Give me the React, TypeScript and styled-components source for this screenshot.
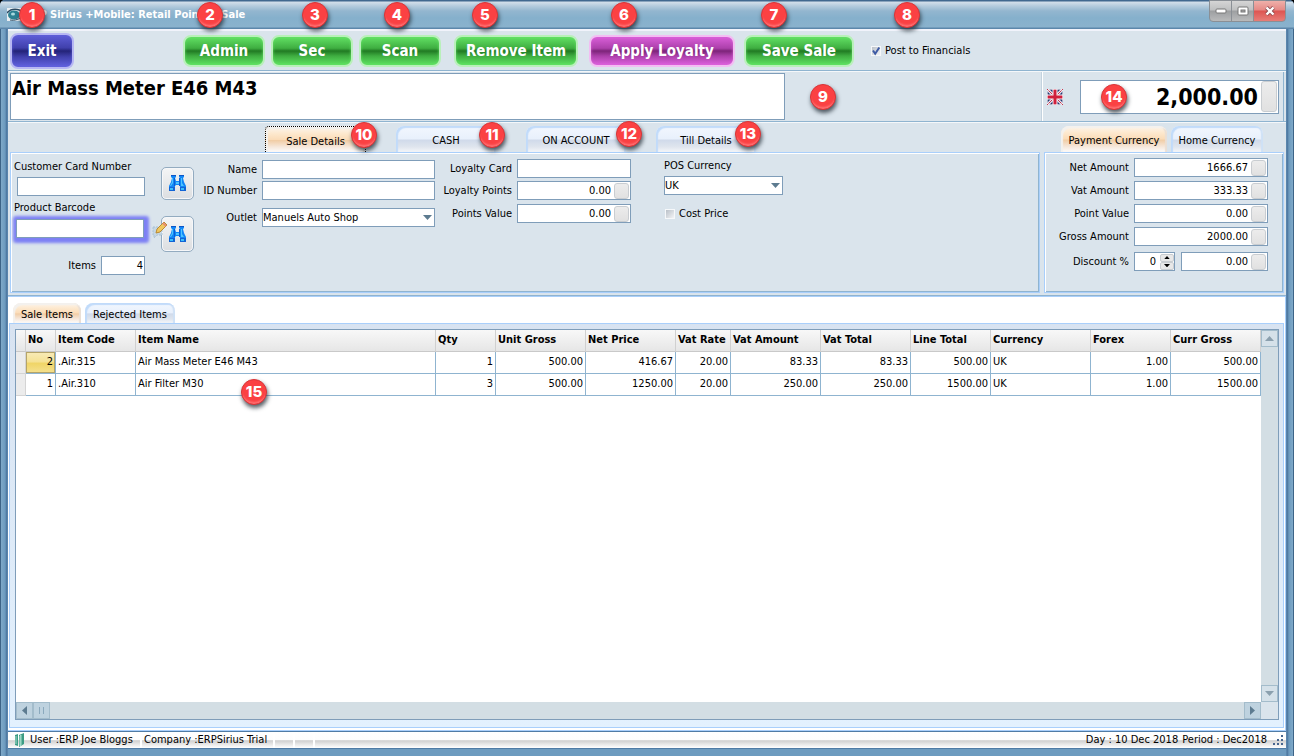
import React from "react";
import styled, { createGlobalStyle, css } from "styled-components";

const ui = '"DejaVu Sans Condensed", "Noto Sans", sans-serif';

const edge = "#7f9db9";
const face = "#dae4ec";
const line = "#8fb4d0";
const sky = "#a9cffb";

const GlobalStyle = createGlobalStyle`
  *, *::before, *::after { box-sizing: border-box; }
  body { margin: 0; background: #000; }
  body, button, input, select, table {
    font-family: ${ui};
    font-size: 11px;
    line-height: 14px;
    color: #000;
  }
  button, input, select { margin: 0; padding: 0; outline: none; }
`;

/* ---------- window frame ---------- */

const Window = styled.div`
  display: flex;
  flex-direction: column;
  min-height: 100vh;
  padding: 0 8px 7px;
  border-radius: 5px 5px 0 0;
  background:
    linear-gradient(90deg, #3d6487 0, #3d6487 1px, #7fa9c8 1px, #6d9bbf 5px, #47709a 7px, transparent 8px) left / 8px 100% no-repeat,
    linear-gradient(270deg, #3d6487 0, #3d6487 1px, #7fa9c8 1px, #6d9bbf 5px, #47709a 7px, transparent 8px) right / 8px 100% no-repeat,
    #6d9bbf;
`;

const TitleBar = styled.header`
  display: flex;
  align-items: flex-start;
  height: 29px;
  margin: 0 -8px;
  padding: 0 8px 0 7px;
  border-radius: 5px 5px 0 0;
  background: linear-gradient(#41688f 0, #41688f 1px, #d3dfea 2px, #b4cbdd 6px, #93b6cf 11px, #85b0cc 18px, #8ab2cd 27px, #5c87ab 28px);
`;

const TitleText = styled.h1`
  flex: 1;
  margin: 0;
  padding: 8px 0 0 2px;
  font-size: 11px;
  line-height: 14px;
  font-weight: bold;
  color: #fff;
  white-space: pre;
`;

const AppIcon = styled.svg`
  width: 16px;
  height: 14px;
  margin-top: 8px;
`;

const WindowButton = styled.button<{ $close?: boolean }>`
  display: flex;
  align-items: center;
  justify-content: center;
  width: ${(p) => (p.$close ? 33 : 23)}px;
  height: 22px;
  margin-left: -1px;
  border: 1px solid #8a8f95;
  border-radius: ${(p) => (p.$close ? "0 0 4px 0" : "0")};
  background: ${(p) =>
    p.$close
      ? "linear-gradient(#efb0aa 0, #e58a86 45%, #dd5552 50%, #e77d78 100%)"
      : "linear-gradient(#d5d5d5 0, #bfc0c1 45%, #9d9fa1 50%, #b9babb 100%)"};
  &:first-of-type { border-radius: 0 0 0 4px; }
`;

const Client = styled.main`
  display: flex;
  flex-direction: column;
  flex: 1;
  background: ${face};
  border-top: 2px solid #f1f3fb;
`;

/* ---------- numbered markers ---------- */

const Marker = styled.span<{ $x: number; $y: number }>`
  position: absolute;
  left: ${(p) => p.$x}px;
  top: ${(p) => p.$y}px;
  z-index: 5;
  width: 26px;
  height: 26px;
  border-radius: 50%;
  background: #fb4143;
  border: 1px solid #d93437;
  box-shadow: 1px 3px 4px rgba(30, 40, 50, 0.75), inset 0 -3px 2px -1px #ff7173;
  color: #fff;
  font-family: Inter, "Open Sans", sans-serif;
  font-weight: 800;
  font-size: 15px;
  line-height: 24px;
  text-align: center;
  pointer-events: none;
`;

/* ---------- toolbar ---------- */

const Toolbar = styled.div`
  display: flex;
  align-items: center;
  height: 40px;
  padding: 0 2px;
  border-bottom: 1px solid ${line};
`;

const Anchor = styled.div<{ $before?: number }>`
  position: relative;
  flex: none;
  margin-left: ${(p) => p.$before ?? 0}px;
`;

const tones = {
  green: ["#b9f0ba", "#62e064", "#3fae41", "#217a23", "#5fe262"],
  blue: ["#b7b7f3", "#5f5fd8", "#4040ac", "#232378", "#6363e0"],
  purple: ["#f3bdf3", "#d95fd8", "#ac40ab", "#7c2479", "#dd62dc"],
};

const GlossButton = styled.button<{ $tone: keyof typeof tones; $w: number; $tall?: boolean }>`
  display: block;
  width: ${(p) => p.$w}px;
  height: ${(p) => (p.$tall ? 36 : 32)}px;
  border: 2px solid ${(p) => tones[p.$tone][0]};
  border-radius: 8px;
  background: ${(p) => {
    const [, hi, mid, dark, low] = tones[p.$tone];
    return `linear-gradient(${hi} 0, ${mid} 40%, ${dark} 50%, ${mid} 68%, ${low} 100%)`;
  }};
  box-shadow: inset 0 0 3px ${(p) => tones[p.$tone][1]};
  color: #fff;
  font-size: 15px;
  font-weight: bold;
  line-height: 20px;
`;

const CheckLabel = styled.label`
  display: flex;
  align-items: center;
  gap: 4px;
`;

const CheckBox = styled.span`
  position: relative;
  width: 10px;
  height: 10px;
  input {
    display: block;
    appearance: none;
    width: 10px;
    height: 10px;
    border: 1px solid #f6f8fa;
    background: linear-gradient(135deg, #b9c0c8, #f3f4f6);
  }
  svg { position: absolute; left: 0; top: 0; }
`;

/* ---------- current item ---------- */

const ItemBar = styled.div`
  display: flex;
  height: 51px;
  padding: 0 2px;
  border-top: 1px solid #f4f7fa;
  border-bottom: 1px solid ${line};
`;

const ItemDisplay = styled.input`
  flex: 3 1 0;
  min-width: 0;
  height: 47px;
  margin-top: 1px;
  padding: 0 1px 17px;
  border: 1px solid ${edge};
  background: #fff;
  font-size: 20px;
  line-height: 28px;
  font-weight: bold;
`;

const ItemSpace = styled.div`
  position: relative;
  flex: 1 1 0;
`;

const TotalPanel = styled.div`
  display: flex;
  align-items: center;
  width: 242px;
  padding: 0 4px;
  border-left: 1px solid #fff;
  border-right: 1px solid ${line};
  box-shadow: -1px 0 0 #c3d2de;
`;

const Flag = styled.svg`
  flex: none;
  width: 16px;
  height: 16px;
  margin-right: 17px;
`;

const TotalBox = styled.div`
  position: relative;
  display: flex;
  flex: 1;
  min-width: 0;
  align-items: center;
  height: 34px;
  border: 1px solid ${edge};
  background: #fff;
  input {
    flex: 1 1 0;
    width: 0;
    min-width: 0;
    border: 0;
    background: none;
    text-align: right;
    font-size: 23px;
    line-height: 30px;
    font-weight: bold;
  }
`;

const CalcButton = styled.button<{ $large?: boolean }>`
  flex: none;
  width: ${(p) => (p.$large ? 16 : 15)}px;
  height: ${(p) => (p.$large ? 31 : 16)}px;
  margin: 0 1px 0 3px;
  border: 1px solid #c9cdd1;
  border-radius: 3px;
  background: linear-gradient(#ececec, #e1e1e1);
`;

/* ---------- tab pages ---------- */

const Pages = styled.div`
  display: flex;
  gap: 4px;
  padding: 3px 2px 2px;
  border-top: 1px solid #f4f7fa;
  border-bottom: 1px solid ${line};
`;

const Page = styled.section<{ $w?: number }>`
  display: flex;
  flex-direction: column;
  min-width: 0;
  ${(p) => (p.$w ? css`flex: none; width: ${p.$w}px;` : css`flex: 1;`)}
`;

const TabRow = styled.div<{ $start: number; $gap: number; $h: number }>`
  display: flex;
  gap: ${(p) => p.$gap}px;
  height: ${(p) => p.$h}px;
  padding-left: ${(p) => p.$start}px;
`;

const Tab = styled.button<{ $w: number; $on?: boolean; $focus?: boolean }>`
  width: ${(p) => p.$w}px;
  height: 100%;
  padding-top: 4px;
  border: 0;
  border-radius: 8px 8px 0 0;
  white-space: nowrap;
  ${(p) =>
    p.$on
      ? css`
          background: linear-gradient(#fbf5ee 0, #fde9cf 25%, #fbdcb8 50%, #f1cda6 54%, #f6e8dc 80%, #fdfcfb 100%);
          box-shadow: inset 2px 2px 1px #f3f1ee, inset -2px 0 1px #eadfd5;
        `
      : css`
          background: linear-gradient(#f2f7fe 0, #e8f0fc 50%, #d0daea 54%, #dfe5ee 80%, #f4f6f9 100%);
          box-shadow: inset 2px 2px 1px #c1dbfa, inset -2px 0 1px #cfe1f6;
        `}
  ${(p) => p.$focus && css`border: 1px dotted #000; border-bottom: 0; border-radius: 4px 4px 0 0;`}
`;

const PageBody = styled.div`
  display: flex;
  flex: 1 0 141px;
  border: 1px solid ${sky};
  box-shadow: inset 1px 1px 0 #fff, inset -1px -1px 0 ${line};
`;

const Stack = styled.div<{ $w?: number; $top: number; $before: number; $gap?: number }>`
  display: flex;
  flex-direction: column;
  flex: none;
  gap: ${(p) => p.$gap ?? 0}px;
  width: ${(p) => (p.$w ? `${p.$w}px` : "auto")};
  padding-top: ${(p) => p.$top}px;
  margin-left: ${(p) => p.$before}px;
`;

const Caption = styled.label`
  display: block;
  height: 18px;
  padding-top: 3px;
  white-space: nowrap;
`;

const Field = styled.div<{ $label: number; $before?: number }>`
  display: grid;
  grid-template-columns: ${(p) => p.$label}px minmax(0, 1fr);
  column-gap: 5px;
  align-items: center;
  height: 19px;
  margin-top: ${(p) => p.$before ?? 0}px;
  > label { text-align: right; white-space: nowrap; }
`;

const TextBox = styled.input<{ $right?: boolean }>`
  display: block;
  width: 100%;
  height: 19px;
  padding: 0 1px;
  border: 1px solid ${edge};
  background: #fff;
  text-align: ${(p) => (p.$right ? "right" : "left")};
`;

const CardField = styled.div`
  margin: 0 0 0 3px;
`;

const BarcodeField = styled.div`
  position: relative;
  margin: 1px 1px 0 2px;
  box-shadow: 1px 1px 3px 4px #7d80f4;
  border-radius: 1px;
`;

const PencilIcon = styled.svg`
  position: absolute;
  left: 136px;
  top: 2px;
  z-index: 2;
`;

const NumberShell = styled.div`
  display: flex;
  align-items: center;
  width: 100%;
  height: 19px;
  border: 1px solid ${edge};
  background: #fff;
  input {
    flex: 1 1 0;
    width: 0;
    min-width: 0;
    border: 0;
    background: none;
    text-align: right;
  }
`;

const SelectShell = styled.div`
  position: relative;
  width: 100%;
  select {
    display: block;
    appearance: none;
    width: 100%;
    height: 19px;
    border: 1px solid ${edge};
    border-radius: 0;
    background: #fff;
  }
  svg { position: absolute; right: 3px; top: 7px; pointer-events: none; }
`;

const FindButton = styled.button<{ $tall?: boolean }>`
  display: flex;
  align-items: center;
  justify-content: center;
  width: 33px;
  height: ${(p) => (p.$tall ? 36 : 33)}px;
  border: 1px solid #93abc0;
  border-radius: 5px;
  background: linear-gradient(#f4f5f6, #dcdee1);
  box-shadow: inset 0 0 0 1px #f6f7f9;
`;

const DiscountCells = styled.div`
  display: grid;
  grid-template-columns: 41px minmax(0, 1fr);
  gap: 6px;
`;

const Spinner = styled(NumberShell)`
  > span { display: flex; flex-direction: column; width: 14px; margin-left: 4px; }
  button {
    display: flex;
    align-items: center;
    justify-content: center;
    height: 8px;
    border: 1px solid #c9cdd1;
    border-radius: 2px;
    background: #e8e8e8;
  }
`;

/* ---------- sale items ---------- */

const Items = styled.section`
  display: flex;
  flex-direction: column;
  flex: 1;
  padding: 6px 1px 2px;
  border: 1px solid ${sky};
  border-left: 0;
  background: #fff;
`;

const ItemsPanel = styled.div`
  display: flex;
  flex: 1;
  padding: 5px 4px 7px 5px;
  border: 1px solid ${sky};
  background: linear-gradient(#d8e3f1, #e3f1fe);
`;

const GridFrame = styled.div`
  display: grid;
  grid-template-columns: minmax(0, 1fr) 17px;
  grid-template-rows: 1fr 17px;
  flex: 1;
  border: 1px solid ${edge};
  background: #fff;
`;

const Table = styled.table`
  width: 100%;
  table-layout: fixed;
  border-collapse: separate;
  border-spacing: 0;
  th, td {
    height: 22px;
    overflow: hidden;
    white-space: nowrap;
  }
  th {
    padding: 0 0 2px 2px;
    text-align: left;
    font-weight: bold;
    border-right: 1px solid #d0d0d0;
    border-bottom: 1px solid #c9c9c9;
    background: linear-gradient(#f8f8f8, #e6e6e6);
  }
  td {
    padding: 0 2px 1px;
    border-right: 1px solid ${line};
    border-bottom: 1px solid ${line};
  }
  td:first-child { background: #ececec; border-color: #d4d4d4; }
`;

const Cell = styled.td<{ $num?: boolean; $current?: boolean }>`
  text-align: ${(p) => (p.$num ? "right" : "left")};
  ${(p) =>
    p.$current &&
    css`
      background: linear-gradient(#f8ebb8 0, #f5e296 45%, #f0d567 55%, #f5e190 100%);
      box-shadow: inset 0 0 0 1px #b5a468;
    `}
`;

const Track = styled.div<{ $vertical?: boolean }>`
  display: flex;
  flex-direction: ${(p) => (p.$vertical ? "column" : "row")};
  background: #d3dee4;
  > span { flex: 1; }
`;

const ScrollButton = styled.button<{ $pale?: boolean }>`
  display: flex;
  align-items: center;
  justify-content: center;
  width: 17px;
  height: 17px;
  border: 1px solid #a3bccb;
  background: ${(p) => (p.$pale ? "#d5e1e9" : "#bed2df")};
`;

const Corner = styled.div`
  background: ${face};
`;

/* ---------- status bar ---------- */

const StatusBar = styled.footer`
  display: flex;
  align-items: center;
  height: 18px;
  padding: 0 2px 0 6px;
  border: 1px solid #4f7ba5;
  border-width: 1px 0;
  background: linear-gradient(#fff 0, #fdfdfd 50%, #cfcfcf 54%, #e6e6e6 75%, #fff 100%);
  white-space: nowrap;
`;

const StatusCell = styled.span<{ $w?: number; $last?: boolean }>`
  min-width: ${(p) => p.$w ?? 0}px;
  height: 16px;
  padding: 1px 0 0 2px;
  border-right: ${(p) => (p.$last ? 0 : 2)}px solid #fff;
`;

const Fill = styled.span`
  flex: 1;
`;

/* ---------- drawings ---------- */

const Triangle = ({ dir, w = 9, color = "#5d7b90" }: { dir: "up" | "down" | "left" | "right"; w?: number; color?: string }) => {
  const pts = { up: "0,5 4.5,0 9,5", down: "0,0 9,0 4.5,5", left: "5,0 5,9 0,4.5", right: "0,0 5,4.5 0,9" }[dir];
  const flat = dir === "up" || dir === "down";
  const h = (w * 5) / 9;
  return (
    <svg width={flat ? w : h} height={flat ? h : w} viewBox={flat ? "0 0 9 5" : "0 0 5 9"} aria-hidden>
      <polygon points={pts} fill={color} />
    </svg>
  );
};

const Binoculars = () => (
  <svg width="17" height="17" viewBox="0 0 17 17" aria-hidden>
    <path d="M2 0h5v2L6 3l1 3h3l1-3-1-1V0h5v2l-1 1 1 4 2 4v5h-6v-5l-1-1H7l-1 1v5H0v-5l2-4 1-4-1-1z" fill="#1186f6" />
    <path d="M3 3h1v5l-2 3H1l2-4zM12 3h1v5l2 3h-3zM7 7h3v2H7z" fill="#4dc4ff" />
    <path d="M5 3h1v8H5zM11 3h-1v8h1z" fill="#0a5fd2" />
    <path d="M0 12h6v4H0zM11 12h6v4h-6z" fill="#1264d6" />
    <path d="M1 13h3v2H1zM12 13h3v2h-3z" fill="#3cc0fb" />
    <path d="M2 0h5v1H2zM10 0h5v1h-5z" fill="#0e55c4" />
  </svg>
);

const Tick = () => (
  <svg width="10" height="10" viewBox="0 0 10 10" aria-hidden>
    <path d="M2 4.5L4.2 7.8L8.3 1.5" fill="none" stroke="#3e5ba5" strokeWidth="2" />
  </svg>
);

/* ---------- data ---------- */

const columns: { name: string; w: number; num?: boolean }[] = [
  { name: "No", w: 30, num: true },
  { name: "Item Code", w: 80 },
  { name: "Item Name", w: 300 },
  { name: "Qty", w: 60, num: true },
  { name: "Unit Gross", w: 90, num: true },
  { name: "Net Price", w: 90, num: true },
  { name: "Vat Rate", w: 55, num: true },
  { name: "Vat Amount", w: 90, num: true },
  { name: "Vat Total", w: 90, num: true },
  { name: "Line Total", w: 80, num: true },
  { name: "Currency", w: 100 },
  { name: "Forex", w: 80, num: true },
  { name: "Curr Gross", w: 90, num: true },
];

const rows = [
  ["2", ".Air.315", "Air Mass Meter E46 M43", "1", "500.00", "416.67", "20.00", "83.33", "83.33", "500.00", "UK", "1.00", "500.00"],
  ["1", ".Air.310", "Air Filter M30", "3", "500.00", "1250.00", "20.00", "250.00", "250.00", "1500.00", "UK", "1.00", "1500.00"],
];

const NumberField = ({ id, label, value, labelWidth, before }: { id: string; label: string; value: string; labelWidth: number; before?: number }) => (
  <Field $label={labelWidth} $before={before}>
    <label htmlFor={id}>{label}</label>
    <NumberShell>
      <input id={id} defaultValue={value} />
      <CalcButton aria-label={`${label} calculator`} />
    </NumberShell>
  </Field>
);

export default function App() {
  return (
    <>
      <GlobalStyle />
      <Window>
        <TitleBar>
          <AppIcon viewBox="0 0 16 14" aria-hidden>
            <rect width="16" height="13" fill="#e9eef2" />
            <path d="M0 5C4 0 12 0 16 5" fill="none" stroke="#2b4a63" strokeWidth="1.5" />
            <ellipse cx="7" cy="7" rx="6" ry="4.5" fill="#2d8092" />
            <ellipse cx="6" cy="6" rx="2" ry="1.5" fill="#a9d9df" />
            <path d="M3 12C8 13 13 11 15 8" fill="none" stroke="#2b4a63" />
          </AppIcon>
          <TitleText>ERP Sirius +Mobile: Retail Point of Sale</TitleText>
          <WindowButton aria-label="Minimize">
            <svg width="12" height="6" viewBox="0 0 12 6"><rect x="1" y="1" width="10" height="4" rx="1" fill="#fff" stroke="#777" /></svg>
          </WindowButton>
          <WindowButton aria-label="Maximize">
            <svg width="12" height="10" viewBox="0 0 12 10">
              <rect x="1" y="1" width="10" height="8" rx="1" fill="#fff" stroke="#777" />
              <rect x="4" y="4" width="4" height="2" fill="#aaa" stroke="#777" />
            </svg>
          </WindowButton>
          <WindowButton $close aria-label="Close">
            <svg width="12" height="10" viewBox="0 0 12 10">
              <path d="M2.5 1.5l7 7M9.5 1.5l-7 7" stroke="#8a4a4e" strokeWidth="4" />
              <path d="M2.5 1.5l7 7M9.5 1.5l-7 7" stroke="#fff" strokeWidth="2.4" />
            </svg>
          </WindowButton>
        </TitleBar>

        <Client>
          <Toolbar>
            <Anchor>
              <GlossButton $tone="blue" $w={64} $tall>Exit</GlossButton>
              <Marker $x={9} $y={-31}>1</Marker>
            </Anchor>
            <Anchor $before={109}>
              <GlossButton $tone="green" $w={82}>Admin</GlossButton>
              <Marker $x={14} $y={-33}>2</Marker>
            </Anchor>
            <Anchor $before={6}>
              <GlossButton $tone="green" $w={82}>Sec</GlossButton>
              <Marker $x={31} $y={-33}>3</Marker>
            </Anchor>
            <Anchor $before={6}>
              <GlossButton $tone="green" $w={82}>Scan</GlossButton>
              <Marker $x={25} $y={-33}>4</Marker>
            </Anchor>
            <Anchor $before={13}>
              <GlossButton $tone="green" $w={124}>Remove Item</GlossButton>
              <Marker $x={18} $y={-33}>5</Marker>
            </Anchor>
            <Anchor $before={11}>
              <GlossButton $tone="purple" $w={146}>Apply Loyalty</GlossButton>
              <Marker $x={22} $y={-33}>6</Marker>
            </Anchor>
            <Anchor $before={9}>
              <GlossButton $tone="green" $w={110}>Save Sale</GlossButton>
              <Marker $x={17} $y={-33}>7</Marker>
            </Anchor>
            <Anchor $before={17}>
              <CheckLabel>
                <CheckBox><input type="checkbox" defaultChecked /><Tick /></CheckBox>
                Post to Financials
              </CheckLabel>
              <Marker $x={23} $y={-42}>8</Marker>
            </Anchor>
          </Toolbar>

          <ItemBar>
            <ItemDisplay aria-label="Current item" defaultValue="Air Mass Meter E46 M43" />
            <ItemSpace><Marker $x={25} $y={12}>9</Marker></ItemSpace>
            <TotalPanel>
              <Flag viewBox="0 0 16 16" aria-label="United Kingdom" role="img">
                <rect width="16" height="16" fill="#26356f" />
                <path d="M0 0L16 16M16 0L0 16" stroke="#e8e4ee" strokeWidth="3" />
                <path d="M0 0L16 16M16 0L0 16" stroke="#c43a50" />
                <path d="M8 0V16M0 8H16" stroke="#f4f0f4" strokeWidth="5" />
                <path d="M8 0V16M0 8H16" stroke="#d01f3c" strokeWidth="3" />
                <rect x=".5" y=".5" width="15" height="15" rx="2" fill="none" stroke="#fff" strokeOpacity=".6" />
              </Flag>
              <TotalBox>
                <input aria-label="Total" defaultValue="2,000.00" />
                <CalcButton $large aria-label="Total calculator" />
                <Marker $x={20} $y={3}>14</Marker>
              </TotalBox>
            </TotalPanel>
          </ItemBar>

          <Pages>
            <Page>
              <TabRow $start={255} $gap={30} $h={26}>
                <Anchor><Tab $w={101} $on $focus>Sale Details</Tab><Marker $x={86} $y={-4}>10</Marker></Anchor>
                <Anchor><Tab $w={100}>CASH</Tab><Marker $x={83} $y={-4}>11</Marker></Anchor>
                <Anchor><Tab $w={100}>ON ACCOUNT</Tab><Marker $x={90} $y={-5}>12</Marker></Anchor>
                <Anchor><Tab $w={100}>Till Details</Tab><Marker $x={79} $y={-5}>13</Marker></Anchor>
              </TabRow>
              <PageBody>
                <Stack $before={3} $top={4} $w={131} $gap={2}>
                  <Caption htmlFor="card">Customer Card Number</Caption>
                  <CardField><TextBox id="card" /></CardField>
                  <Caption htmlFor="barcode">Product Barcode</Caption>
                  <BarcodeField>
                    <TextBox id="barcode" autoFocus />
                    <PencilIcon width="16" height="17" viewBox="0 0 16 17" aria-hidden>
                      <path d="M1 6h9v8H5l-3 3v-3H1z" fill="#c5d7e6" stroke="#a9c0d4" strokeDasharray="2 1" />
                      <path d="M4 12l1-4 7-7 3 3-7 7z" fill="#f0c860" stroke="#b98a35" />
                      <path d="M11 2l3 3" stroke="#e78e72" strokeWidth="2" />
                    </PencilIcon>
                  </BarcodeField>
                  <Field $label={82} $before={16}>
                    <label htmlFor="items">Items</label>
                    <TextBox id="items" $right defaultValue="4" />
                  </Field>
                </Stack>
                <Stack $before={16} $top={14} $gap={16}>
                  <FindButton aria-label="Find customer"><Binoculars /></FindButton>
                  <FindButton $tall aria-label="Find product"><Binoculars /></FindButton>
                </Stack>
                <Stack $before={9} $top={7} $w={232} $gap={2}>
                  <Field $label={54}><label htmlFor="name">Name</label><TextBox id="name" /></Field>
                  <Field $label={54}><label htmlFor="idno">ID Number</label><TextBox id="idno" /></Field>
                  <Field $label={54} $before={6}>
                    <label htmlFor="outlet">Outlet</label>
                    <SelectShell>
                      <select id="outlet"><option>Manuels Auto Shop</option></select>
                      <Triangle dir="down" />
                    </SelectShell>
                  </Field>
                </Stack>
                <Stack $before={7} $top={6} $w={189} $gap={3}>
                  <Field $label={70}><label htmlFor="lcard">Loyalty Card</label><TextBox id="lcard" /></Field>
                  <NumberField id="lpoints" label="Loyalty Points" value="0.00" labelWidth={70} />
                  <NumberField id="pvalue" label="Points Value" value="0.00" labelWidth={70} before={1} />
                </Stack>
                <Stack $before={33} $top={3} $w={119} $gap={2}>
                  <Caption htmlFor="pos">POS Currency</Caption>
                  <SelectShell>
                    <select id="pos"><option>UK</option></select>
                    <Triangle dir="down" />
                  </SelectShell>
                  <Stack $before={1} $top={10}>
                    <CheckLabel>
                      <CheckBox><input type="checkbox" /></CheckBox>
                      Cost Price
                    </CheckLabel>
                  </Stack>
                </Stack>
              </PageBody>
            </Page>

            <Page $w={240}>
              <TabRow $start={17} $gap={4} $h={26}>
                <Tab $w={106} $on>Payment Currency</Tab>
                <Tab $w={92}>Home Currency</Tab>
              </TabRow>
              <PageBody>
                <Stack $before={11} $top={5} $w={212} $gap={4}>
                  <NumberField id="net" label="Net Amount" value="1666.67" labelWidth={73} />
                  <NumberField id="vat" label="Vat Amount" value="333.33" labelWidth={73} />
                  <NumberField id="point" label="Point Value" value="0.00" labelWidth={73} />
                  <NumberField id="gross" label="Gross Amount" value="2000.00" labelWidth={73} />
                  <Field $label={73} $before={2}>
                    <label htmlFor="disc">Discount %</label>
                    <DiscountCells>
                      <Spinner>
                        <input id="disc" defaultValue="0" />
                        <span>
                          <button aria-label="Increase"><Triangle dir="up" w={6} color="#000" /></button>
                          <button aria-label="Decrease"><Triangle dir="down" w={6} color="#000" /></button>
                        </span>
                      </Spinner>
                      <NumberShell>
                        <input aria-label="Discount amount" defaultValue="0.00" />
                        <CalcButton aria-label="Discount calculator" />
                      </NumberShell>
                    </DiscountCells>
                  </Field>
                </Stack>
              </PageBody>
            </Page>
          </Pages>

          <Items>
            <TabRow $start={4} $gap={4} $h={20}>
              <Tab $w={68} $on>Sale Items</Tab>
              <Tab $w={90}>Rejected Items</Tab>
            </TabRow>
            <ItemsPanel>
              <GridFrame>
                <Anchor>
                  <Table>
                    <colgroup>
                      <col style={{ width: 10 }} />
                      {columns.map((c) => <col key={c.name} style={{ width: c.w }} />)}
                    </colgroup>
                    <thead>
                      <tr>
                        <th />
                        {columns.map((c) => <th key={c.name}>{c.name}</th>)}
                      </tr>
                    </thead>
                    <tbody>
                      {rows.map((r, i) => (
                        <tr key={r[0]}>
                          <td />
                          {r.map((v, j) => (
                            <Cell key={j} $num={columns[j].num} $current={i === 0 && j === 0}>{v}</Cell>
                          ))}
                        </tr>
                      ))}
                    </tbody>
                  </Table>
                  <Marker $x={225} $y={49}>15</Marker>
                </Anchor>
                <Track $vertical>
                  <ScrollButton $pale aria-label="Scroll up"><Triangle dir="up" color="#8ba0ae" /></ScrollButton>
                  <span />
                  <ScrollButton $pale aria-label="Scroll down"><Triangle dir="down" color="#8ba0ae" /></ScrollButton>
                </Track>
                <Track>
                  <ScrollButton aria-label="Scroll left"><Triangle dir="left" /></ScrollButton>
                  <ScrollButton aria-label="Scroll thumb">
                    <svg width="5" height="7" viewBox="0 0 5 7"><path d="M.5 0V7M4.5 0V7" stroke="#8ba9bd" /></svg>
                  </ScrollButton>
                  <span />
                  <ScrollButton aria-label="Scroll right"><Triangle dir="right" /></ScrollButton>
                </Track>
                <Corner />
              </GridFrame>
            </ItemsPanel>
          </Items>

          <StatusBar>
            <svg width="12" height="14" viewBox="0 0 12 14" aria-hidden>
              <path d="M1 2l3-1v12l-3-1zM5 2l5-2v11l-5 3z" fill="#3c9c84" />
              <path d="M6 3l1-1v10l-1 1zM2 3v8" stroke="#a6dccb" fill="#7cc7b2" />
            </svg>
            <Anchor $before={2} />
            <StatusCell $w={114}>User :ERP Joe Bloggs</StatusCell>
            <StatusCell $w={133}>Company :ERPSirius Trial</StatusCell>
            <StatusCell $w={20} />
            <StatusCell $w={20} />
            <Fill />
            <StatusCell $last>Day : 10 Dec 2018</StatusCell>
            <Anchor $before={2} />
            <StatusCell $last>Period : Dec2018</StatusCell>
            <Anchor $before={5} />
            <svg width="12" height="12" viewBox="0 0 12 12" aria-hidden>
              <path d="M9 1h2v2H9zM5 5h2v2H5zM9 5h2v2H9zM1 9h2v2H1zM5 9h2v2H5zM9 9h2v2H9z" fill="#47658e" />
            </svg>
          </StatusBar>
        </Client>
      </Window>
    </>
  );
}
